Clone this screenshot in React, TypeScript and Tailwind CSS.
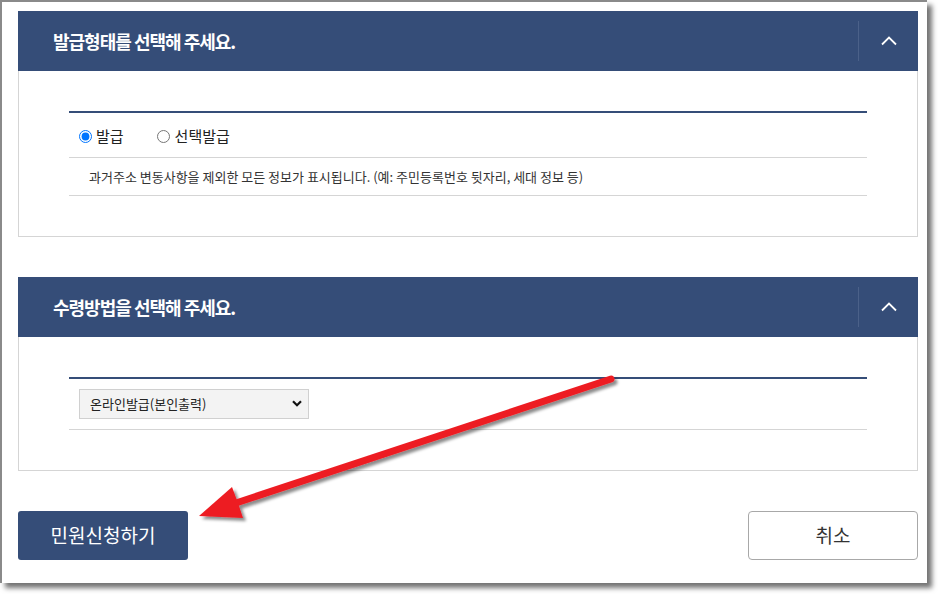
import React from "react";

function Chevron() {
  return (
    <svg width="16" height="10" viewBox="0 0 16 10" fill="none">
      <path d="M1 8.5 L8 1.5 L15 8.5" stroke="white" strokeWidth="1.8" />
    </svg>
  );
}

function PanelHeader({ title }: { title: string }) {
  return (
    <div className="flex h-[60px] items-center bg-[#354d78]">
      <h2 className="flex-1 pl-[35px] text-[18px] font-bold tracking-[-1px] text-white">{title}</h2>
      <div className="h-[40px] w-px bg-[#4b6189]" />
      <button className="flex h-full w-[59px] items-center justify-center">
        <Chevron />
      </button>
    </div>
  );
}

function Arrow() {
  return (
    <svg className="pointer-events-none absolute left-0 top-0" width="938" height="594" viewBox="0 0 938 594">
      <defs>
        <filter id="sh" x="-10%" y="-10%" width="130%" height="130%">
          <feDropShadow dx="3" dy="3" stdDeviation="1.4" floodColor="#000" floodOpacity="0.45" />
        </filter>
      </defs>
      <g filter="url(#sh)">
        <line x1="611" y1="379" x2="236" y2="503" stroke="#ed1c24" strokeWidth="7" strokeLinecap="round" />
        <polygon points="199,516 232,487 238,503 243,518" fill="#ed1c24" />
      </g>
    </svg>
  );
}

export default function App() {
  return (
    <div className="relative h-[594px] w-[938px] bg-white font-['Noto_Sans_CJK_KR',sans-serif]">
      <div className="h-[583px] w-[927px] border-l-2 border-t-2 border-[#8a8a8a] bg-white pl-[16px] pr-[9px] pt-[9px] shadow-[5px_5px_5px_rgba(0,0,0,0.55)]">
        <section>
          <PanelHeader title="발급형태를 선택해 주세요." />
          <div className="border-x border-b border-[#d5d5d5] px-[50px] pb-[40px] pt-[40px]">
            <div className="border-t-2 border-[#354d78]">
              <div className="flex h-[45px] items-center border-b border-[#d5d5d5] pl-[10px] pt-[2px] text-[15px] text-[#222]">
                <label className="flex items-center gap-[4px]">
                  <input type="radio" name="issue" defaultChecked className="m-0 h-[13px] w-[13px] accent-[#0075ff]" />
                  발급
                </label>
                <label className="ml-[33px] flex items-center gap-[5px]">
                  <input type="radio" name="issue" className="m-0 h-[13px] w-[13px]" />
                  선택발급
                </label>
              </div>
              <p className="flex h-[38px] items-center border-b border-[#d5d5d5] pl-[20px] text-[13px] text-[#333]">
                과거주소 변동사항을 제외한 모든 정보가 표시됩니다. (예: 주민등록번호 뒷자리, 세대 정보 등)
              </p>
            </div>
          </div>
        </section>

        <section className="mt-[40px]">
          <PanelHeader title="수령방법을 선택해 주세요." />
          <div className="border-x border-b border-[#d5d5d5] px-[50px] pb-[40px] pt-[40px]">
            <div className="border-t-2 border-[#354d78]">
              <div className="flex h-[51px] items-center border-b border-[#d5d5d5] pl-[10px]">
                <div className="relative">
                  <select className="h-[30px] w-[230px] appearance-none border border-[#d0d0d0] bg-[#f3f3f3] pl-[10px] text-[13px] text-[#222] outline-none">
                    <option>온라인발급(본인출력)</option>
                    <option>우편수령</option>
                  </select>
                  <svg className="pointer-events-none absolute right-[7px] top-[11px]" width="10" height="7" viewBox="0 0 10 7" fill="none">
                    <path d="M1 1.2 L5 5.2 L9 1.2" stroke="#111" strokeWidth="2.2" />
                  </svg>
                </div>
              </div>
            </div>
          </div>
        </section>

        <div className="mt-[40px] flex justify-between">
          <button className="h-[49px] w-[170px] rounded-[3px] bg-[#354d78] text-[19px] text-white">민원신청하기</button>
          <button className="h-[49px] w-[170px] rounded-[4px] border border-[#a8a8a8] bg-white text-[19px] text-[#333]">취소</button>
        </div>
      </div>
      <Arrow />
    </div>
  );
}
